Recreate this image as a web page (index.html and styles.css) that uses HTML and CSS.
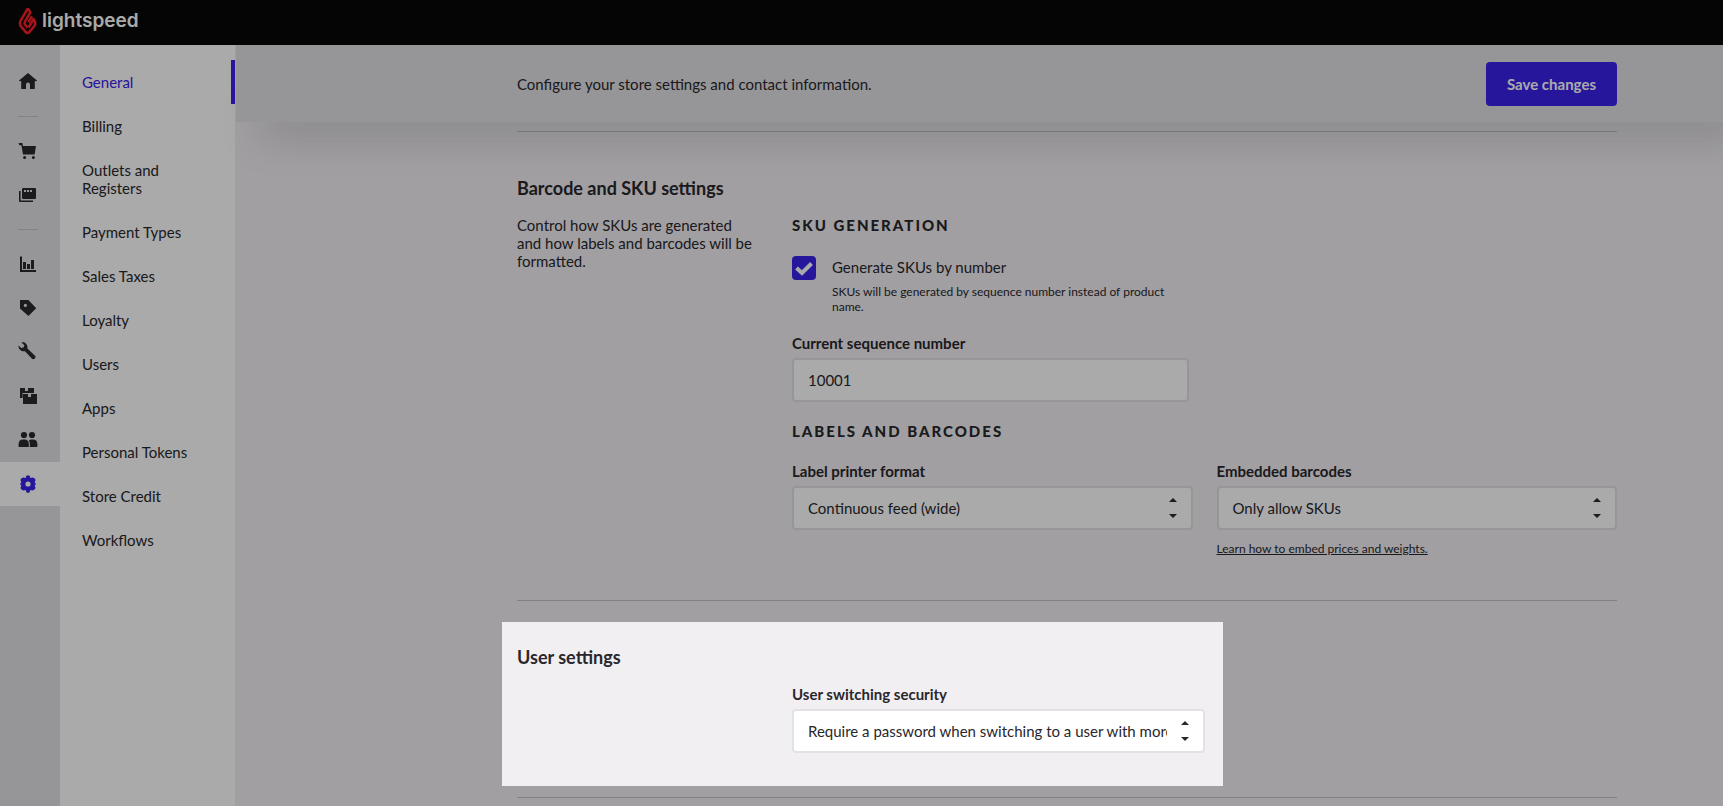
FILE: index.html
```html
<!DOCTYPE html>
<html lang="en">
<head>
    <meta charset="UTF-8">
    <meta name="viewport" content="width=device-width, initial-scale=1">
    <title>General settings</title>
    <link rel="stylesheet" href="styles.css">
</head>
<body>
    <header class="topbar">
        <a class="brand" href="#">
            <svg class="flame" viewBox="0 0 20 28" width="20" height="28" aria-hidden="true">
                <path d="M9.8 1.4 2.8 13.4Q1 17 3.2 19.6L7.6 24.8Q9.5 27 11.4 24.8L15.9 19.6Q18.2 17 16.6 14L15.6 12.2 10.4 20.6"/>
                <path d="M9.8 1.4 12.4 5.4 7 14.6Q6 16.4 7.4 18L9.6 20.6M14 9.4 10.4 15.4"/>
            </svg>
            <span class="brand-name">lightspeed</span>
        </a>
    </header>
    <div class="layout">
        <nav class="rail" aria-label="Main">
            <a class="rail-item" href="#" aria-label="Home">
                <svg viewBox="0 0 20 20" width="20" height="20"><path d="M10 1 19 8.4 18 9.4 16.8 8.8V17H12V12.4A2 2 0 0 0 8 12.4V17H3.2V8.8L2 9.4 1 8.4z"/></svg>
            </a>
            <hr class="rail-line">
            <a class="rail-item" href="#" aria-label="Sell">
                <svg viewBox="0 0 20 20" width="20" height="20"><path d="M.6 2H4.4L5 5H18L16.6 13.6H5L3.4 4.2H1.4z"/><circle cx="6.6" cy="16.4" r="1.5"/><circle cx="15.4" cy="16.4" r="1.5"/></svg>
            </a>
            <a class="rail-item" href="#" aria-label="Register">
                <svg viewBox="0 0 20 20" width="20" height="20"><path fill-rule="evenodd" d="M5 3H17A1 1 0 0 1 18 4V13A1 1 0 0 1 17 14H5A1 1 0 0 1 4 13V4A1 1 0 0 1 5 3zM6 5V7H8V5zM9 5V7H11V5zM12 5V7H14V5z"/><path d="M1 6H2.6V15.4H15V17H2A1 1 0 0 1 1 16z"/></svg>
            </a>
            <hr class="rail-line">
            <a class="rail-item" href="#" aria-label="Reporting">
                <svg viewBox="0 0 20 20" width="20" height="20"><path d="M2 2.4H4V16H18V18H2zM5 8H8V15H5zM9 10H12V15H9zM13 6H16V15H13z"/></svg>
            </a>
            <a class="rail-item" href="#" aria-label="Catalog">
                <svg viewBox="0 0 20 20" width="20" height="20"><path fill-rule="evenodd" d="M2 2H10.4L18.2 10.2 10.4 18 2 10.4zM7.4 5.8A1.6 1.6 0 1 0 7.4 9 1.6 1.6 0 1 0 7.4 5.8z"/></svg>
            </a>
            <a class="rail-item" href="#" aria-label="Setup tools">
                <svg viewBox="0 0 20 20" width="20" height="20"><path d="M3.4 .4C6.6-.6 10 2 9.4 6.4L16.8 13.4A2 2 0 0 1 13.8 16.4L7 9.2C3 9.8 0 6.6 .6 3.4L3.2 6 5.6 5.4 6.4 3.2z"/></svg>
            </a>
            <a class="rail-item" href="#" aria-label="Inventory">
                <svg viewBox="0 0 20 20" width="20" height="20"><path d="M2 2H7V5H10V2H16V7H4.6V12H2zM5 8H10V11H13V8H19V18H5z"/></svg>
            </a>
            <a class="rail-item" href="#" aria-label="Customers">
                <svg viewBox="0 0 20 20" width="20" height="20"><circle cx="6" cy="5" r="3.1"/><circle cx="14" cy="5" r="3.1"/><path d="M.6 17V14A4.6 4.6 0 0 1 5.2 9.6H6.6A4.4 4.4 0 0 1 10.8 14V17zM11.8 17V14A5.4 5.4 0 0 0 10.8 10.6 A4.6 4.6 0 0 1 13.6 9.6H14.8A4.6 4.6 0 0 1 19.4 14V16A1 1 0 0 1 18.4 17z"/></svg>
            </a>
            <a class="rail-item rail-item-active" href="#" aria-label="Setup" aria-current="page">
                <svg viewBox="0 0 20 20" width="20" height="20"><path fill-rule="evenodd" d="M8.4 1.8Q10 .8 11.6 1.8L12.4 4 14.8 3.6Q16.8 4 17.6 6L16.6 8.2 18 10 16.6 11.8 17.6 14Q16.8 16 14.8 16.4L12.4 16 11.6 18.2Q10 19.2 8.4 18.2L7.6 16 5.2 16.4Q3.2 16 2.4 14L3.4 11.8 2 10 3.4 8.2 2.4 6Q3.2 4 5.2 3.6L7.6 4zM10 7.4A2.6 2.6 0 1 0 10 12.6 2.6 2.6 0 1 0 10 7.4z"/></svg>
            </a>
        </nav>
        <nav class="subnav" aria-label="Setup">
            <a class="subnav-item subnav-item-active" href="#" aria-current="page">General</a>
            <a class="subnav-item" href="#">Billing</a>
            <a class="subnav-item" href="#">Outlets and Registers</a>
            <a class="subnav-item" href="#">Payment Types</a>
            <a class="subnav-item" href="#">Sales Taxes</a>
            <a class="subnav-item" href="#">Loyalty</a>
            <a class="subnav-item" href="#">Users</a>
            <a class="subnav-item" href="#">Apps</a>
            <a class="subnav-item" href="#">Personal Tokens</a>
            <a class="subnav-item" href="#">Store Credit</a>
            <a class="subnav-item" href="#">Workflows</a>
        </nav>
        <main class="main">
            <div class="actionbar">
                <p class="actionbar-text">Configure your store settings and contact information.</p>
                <button class="button" type="submit" form="settings">Save changes</button>
            </div>
            <form class="settings" id="settings">
                <section class="section">
                    <h2 class="section-title">Barcode and SKU settings</h2>
                    <div class="section-body">
                        <p class="section-intro">Control how SKUs are generated and how labels and barcodes will be formatted.</p>
                        <div class="section-fields">
                            <h3 class="group-title">SKU generation</h3>
                            <div class="check narrow">
                                <span class="check-box">
                                    <input class="check-input" type="checkbox" id="generate" aria-describedby="generate-help" checked>
                                    <svg class="check-mark" viewBox="0 0 24 24" width="24" height="24" aria-hidden="true"><path d="M4.5 12 10 17 19.5 7.5"/></svg>
                                </span>
                                <div class="check-text">
                                    <label for="generate">Generate SKUs by number</label>
                                    <p class="help" id="generate-help">SKUs will be generated by sequence number instead of product name.</p>
                                </div>
                            </div>
                            <div class="field narrow">
                                <label class="field-label" for="sequence">Current sequence number</label>
                                <input class="control" type="text" id="sequence" value="10001">
                            </div>
                            <h3 class="group-title">Labels and barcodes</h3>
                            <div class="field-row">
                                <div class="field">
                                    <label class="field-label" for="printer">Label printer format</label>
                                    <div class="select">
                                        <select class="control" id="printer">
                                            <option>Continuous feed (wide)</option>
                                        </select>
                                        <svg class="select-arrows" viewBox="0 0 8 20" width="8" height="20" aria-hidden="true"><path d="M0 4 4 0 8 4zM0 16 4 20 8 16z"/></svg>
                                    </div>
                                </div>
                                <div class="field">
                                    <label class="field-label" for="embedded">Embedded barcodes</label>
                                    <div class="select">
                                        <select class="control" id="embedded">
                                            <option>Only allow SKUs</option>
                                        </select>
                                        <svg class="select-arrows" viewBox="0 0 8 20" width="8" height="20" aria-hidden="true"><path d="M0 4 4 0 8 4zM0 16 4 20 8 16z"/></svg>
                                    </div>
                                    <a class="field-link" href="#">Learn how to embed prices and weights.</a>
                                </div>
                            </div>
                        </div>
                    </div>
                </section>
                <section class="section">
                    <h2 class="section-title">User settings</h2>
                    <div class="section-body">
                        <div class="section-fields">
                            <div class="field half">
                                <label class="field-label" for="switching">User switching security</label>
                                <div class="select">
                                    <select class="control" id="switching">
                                        <option>Require a password when switching to a user with more privileges</option>
                                    </select>
                                    <svg class="select-arrows" viewBox="0 0 8 20" width="8" height="20" aria-hidden="true"><path d="M0 4 4 0 8 4zM0 16 4 20 8 16z"/></svg>
                                </div>
                            </div>
                        </div>
                    </div>
                    <div class="spotlight"></div>
                </section>
            </form>
        </main>
    </div>
</body>
</html>
```
FILE: styles.css
```css
*{box-sizing: border-box}
body{margin: 0;min-height: 100vh;display: flex;flex-direction: column;background: #f2eff3;color: #29272b;font: 15px/18px Lato, sans-serif;overflow-x: hidden}
h2,h3,p{margin: 0}
a{color: inherit;text-decoration: none}
svg{display: block;fill: currentColor}

.topbar{display: flex;align-items: center;height: 45px;padding: 0 18px;background: #080808}
.brand{display: flex;align-items: center;gap: 4px;padding-bottom: 4px;color: #fff}
.flame{fill: none;stroke: #fa1e28;stroke-width: 2.6;stroke-linejoin: round}
.brand-name{font: 600 19px/24px Inter, sans-serif}

.layout{display: flex;flex: 1}
.rail{flex: none;width: 60px;padding-top: 15px;background: #e2e2e5}
.rail-item{display: flex;align-items: center;height: 44px;padding-left: 18px}
.rail-item-active{background: #fff;color: #3a21ea}
.rail-line{width: 20px;height: 1px;margin: 12px 18px;border: 0;background: #c6c5c8}
.subnav{flex: none;width: 176px;padding-top: 15px;background: #fff;border-right: 1px solid #f2eff3}
.subnav-item{display: block;padding: 13px 40px 13px 22px}
.subnav-item-active{color: #3a21ea;border-right: 4px solid #3a21ea}

.main{flex: 1;min-width: 0}
/* runs past the right edge so the shadow does not fade out there */
.actionbar{position: relative;z-index: 1;display: flex;align-items: center;justify-content: space-between;height: 77px;margin-right: -50px;padding: 0 156px 0 281px;background: #e2e2e4;box-shadow: 0 38px 40px -25px rgba(60,64,67,.26)}
.button{height: 44px;padding: 0 21px;border: 0;border-radius: 4px;background: #3a21ea;color: #fff;font: 700 15px/18px Lato, sans-serif}

.settings{margin-top: 9px;padding: 0 106px 0 281px}
.section{position: relative;padding: 44px 0;border-top: 1px solid #c4c2c6}
.section:last-child{border-bottom: 1px solid #c4c2c6}
.section-title{margin-bottom: 16px;font-size: 18px;line-height: 24px}
.section-body{display: flex}
.section-intro{width: 25%;padding-right: 36px}
.section-fields{width: 75%;margin-left: auto}
.group-title{margin-bottom: 22px;font-size: 15px;font-weight: 900;letter-spacing: 2px;text-transform: uppercase}
.narrow{width: 397px;max-width: 100%;margin-bottom: 20px}
.half{width: 50%}

.check{display: flex;gap: 16px}
.check-box{flex: none;display: grid;width: 24px;height: 24px}
.check-input{grid-area: 1/1;appearance: none;width: 24px;height: 24px;margin: 0;border: 0;border-radius: 4px;background: #fff}
.check-input:checked{background: #3a21ea}
.check-mark{grid-area: 1/1;fill: none;stroke: #fff;stroke-width: 4;pointer-events: none}
.check-text{padding-top: 2px}
.help{margin-top: 8px;font-size: 12px;line-height: 15px}

.field-row{display: grid;grid-template-columns: 1fr 1fr;gap: 24px}
.field-label{display: block;margin-bottom: 6px;font-weight: 700}
.control{display: block;width: 100%;height: 44px;padding: 0 14px;border: 2px solid #e2e1e5;border-radius: 4px;background: #fff;color: inherit;font: inherit;appearance: none}
.select{position: relative}
.select .control{padding-right: 36px}
.select-arrows{position: absolute;top: 12px;right: 16px;pointer-events: none}
.field-link{display: block;width: fit-content;margin-top: 11px;font-size: 12px;line-height: 15px;text-decoration: underline}

/* dims everything except the user settings block */
.spotlight{position: absolute;z-index: 10;top: 21px;left: -15px;width: 721px;bottom: 11px;box-shadow: 0 0 0 3000px rgba(0,0,0,.333);pointer-events: none}
```
